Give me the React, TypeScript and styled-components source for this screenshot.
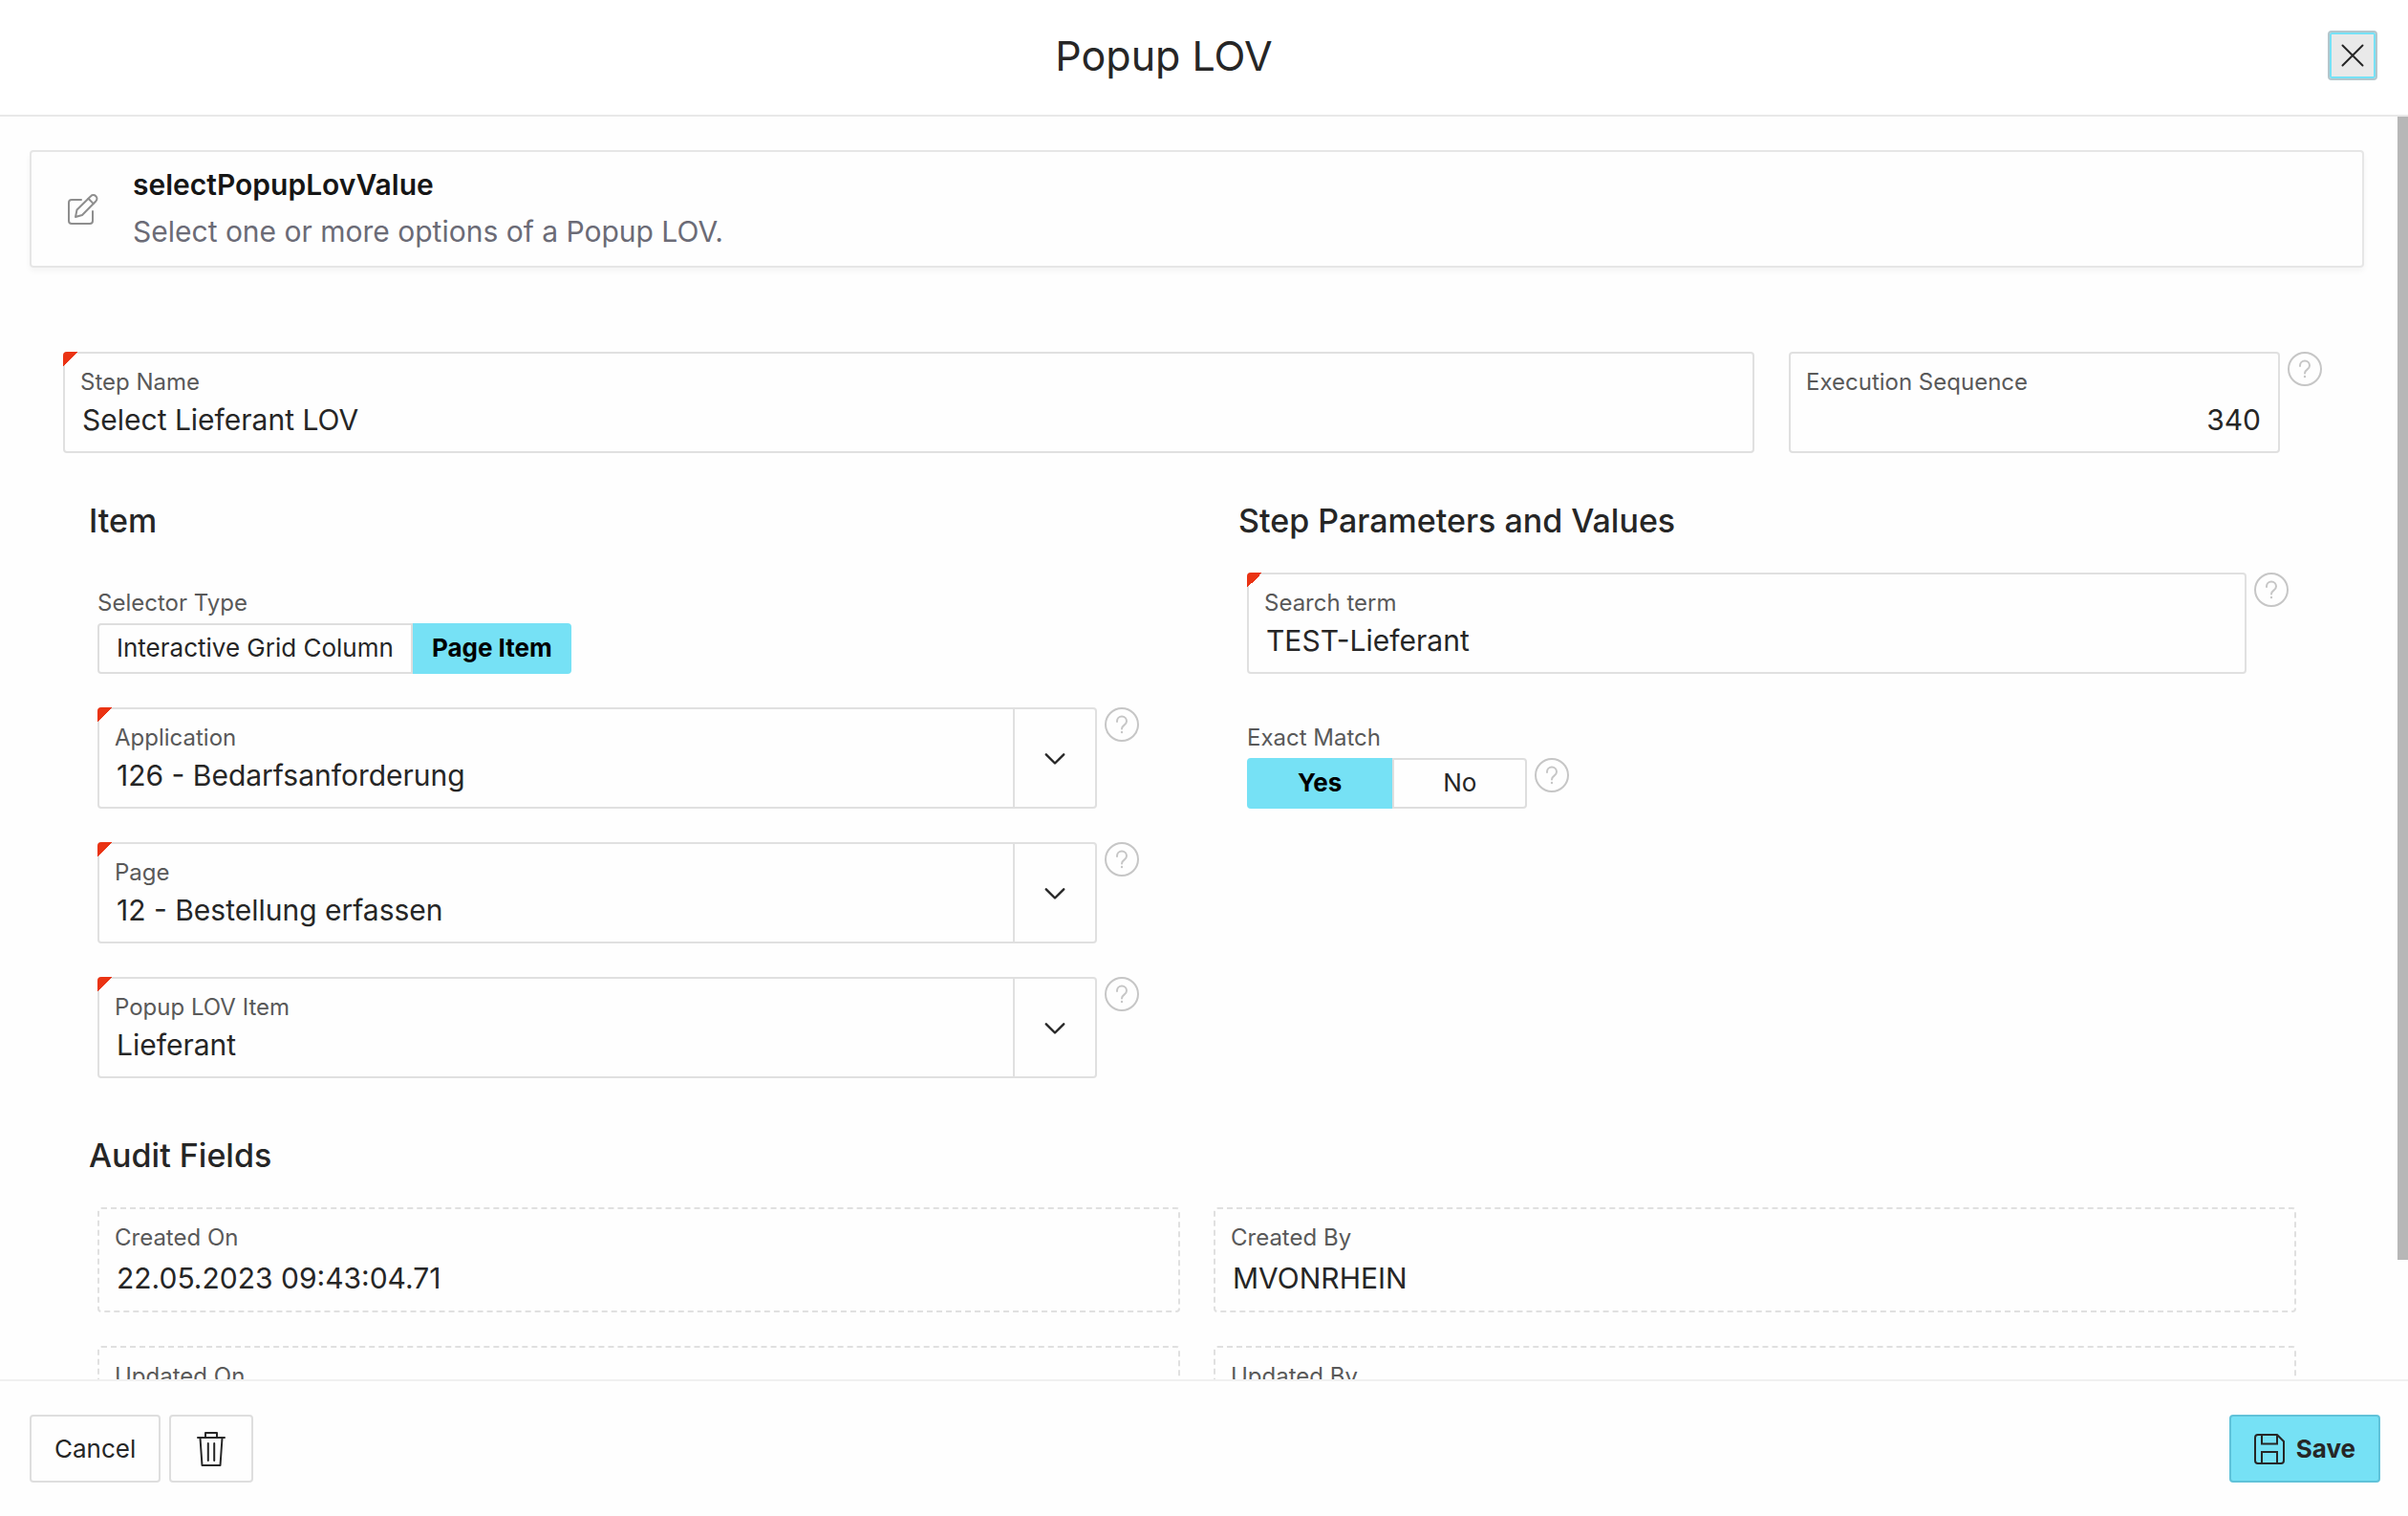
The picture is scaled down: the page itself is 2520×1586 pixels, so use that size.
import React, { useEffect, useId, useRef, useState } from "react";
import styled, { createGlobalStyle, css } from "styled-components";

const colors = {
  text: "#262626",
  label: "#595959",
  muted: "#6b6b76",
  page: "#fefefe",
  line: "#e0e0e0",
  divider: "#e8e8e8",
  accent: "#76e1f5",
  accentEdge: "#60c2d9",
  required: "#ea3313",
  help: "#c6c6c6",
};

const GlobalStyle = createGlobalStyle`
  *, *::before, *::after { box-sizing: border-box; }
  body {
    margin: 0;
    background: ${colors.page};
    color: ${colors.text};
    font-family: Inter, "Liberation Sans", sans-serif;
  }
  button, input { font: inherit; color: inherit; }
`;

const Dialog = styled.div`
  display: flex;
  flex-direction: column;
  height: 100vh;
`;

const Header = styled.header`
  display: flex;
  align-items: center;
  flex: none;
  gap: 32px;
  padding: 32px;
  padding-bottom: 36px;
  border-bottom: 2px solid ${colors.divider};
  background: #fff;
`;

const DialogTitle = styled.h1`
  flex: 1;
  margin: 0;
  text-align: center;
  font-size: 43px;
  line-height: 52px;
  font-weight: 400;
`;

const CloseButton = styled.button`
  display: flex;
  align-items: center;
  justify-content: center;
  width: 52px;
  height: 52px;
  padding: 0;
  border: 2px solid #b3c6cc;
  border-radius: 4px;
  background: #e9e9e9;
  box-shadow: inset 0 0 0 2px ${colors.accent};
`;

const Body = styled.div`
  display: flex;
  flex: 1;
  min-height: 0;
`;

const ScrollPane = styled.main`
  flex: 1;
  min-width: 0;
  overflow-y: auto;
  scrollbar-width: none;
  padding-bottom: 63px;
`;

const ScrollTrack = styled.div`
  flex: none;
  width: 14px;
  padding-left: 3px;
`;

const ScrollThumb = styled.div`
  background: #b7b7b7;
`;

const InfoCard = styled.section`
  display: flex;
  align-items: center;
  gap: 36px;
  margin: 35px 32px 88px 31px;
  padding: 16px 38px 18px;
  border: 2px solid #e6e6e6;
  border-radius: 4px;
  box-shadow: 0 4px 6px rgba(0, 0, 0, 0.04);
`;

const InfoText = styled.div`
  display: flex;
  flex-direction: column;
  gap: 13px;
  font-size: 30px;
  line-height: 36px;
`;

const InfoTitle = styled.h2`
  margin: 0;
  font: inherit;
  font-weight: 600;
  color: #161616;
`;

const InfoDescription = styled.p`
  margin: 0;
  color: ${colors.muted};
`;

const StepRow = styled.div`
  display: grid;
  grid-template-columns: 9fr 3fr;
  padding: 0 50px 0 48px;
`;

const StepCell = styled.div`
  padding: 0 18px;
`;

const Regions = styled.div`
  display: grid;
  grid-template-columns: 1fr 1fr;
  margin-top: 51px;
  padding: 0 50px;
`;

const Region = styled.section`
  min-width: 0;
`;

const AuditRegion = styled(Region)`
  margin-top: 61px;
  padding: 0 50px;
`;

const RegionTitle = styled.h2`
  margin: 0 0 34px;
  padding-left: 43px;
  font-size: 34px;
  line-height: 40px;
  font-weight: 500;
`;

const FieldStack = styled.div`
  display: flex;
  flex-direction: column;
  gap: 35px;
  padding: 0 61px 0 52px;
`;

const AuditGrid = styled.div`
  display: grid;
  grid-template-columns: 1fr 1fr;
  gap: 35px;
  padding: 0 53px 0 52px;
`;

const FieldRow = styled.div<{ $trailing?: boolean }>`
  display: flex;
  align-items: flex-start;
  gap: 8px;
  ${(p) => p.$trailing && css`padding-right: 8px;`}
`;

const FieldBox = styled.div<{ $required?: boolean; $readOnly?: boolean }>`
  position: relative;
  display: flex;
  flex: 1;
  min-width: 0;
  height: ${(p) => (p.$readOnly ? "110px" : "106px")};
  border: 2px ${(p) => (p.$readOnly ? "dashed" : "solid")} ${colors.line};
  border-radius: 4px;

  ${(p) =>
    p.$required &&
    css`
      &::before {
        content: "";
        position: absolute;
        top: -2px;
        left: -2px;
        width: 16px;
        height: 16px;
        border-top-left-radius: 4px;
        background: linear-gradient(135deg, ${colors.required} 50%, transparent 50%);
      }
    `}
`;

const FieldText = styled.div<{ $gap?: number }>`
  display: flex;
  flex: 1;
  min-width: 0;
  flex-direction: column;
  gap: ${(p) => p.$gap ?? 7}px;
  padding: 16px 18px 0 16px;
`;

const FieldLabel = styled.label`
  font-size: 24px;
  line-height: 28px;
  color: ${colors.label};
`;

const FieldInput = styled.input<{ $alignEnd?: boolean }>`
  width: 100%;
  height: 36px;
  padding: 0 0 0 2px;
  border: 0;
  outline: 0;
  background: transparent;
  font-size: 30px;
  line-height: 36px;
  text-align: ${(p) => (p.$alignEnd ? "right" : "left")};
`;

const LovButton = styled.button`
  display: flex;
  align-items: center;
  justify-content: center;
  flex: none;
  width: 86px;
  padding: 0;
  border: 0;
  border-left: 2px solid ${colors.line};
  background: transparent;
`;

const HelpButton = styled.button`
  display: block;
  flex: none;
  width: 36px;
  height: 36px;
  padding: 0;
  border: 0;
  background: transparent;
  color: ${colors.help};

  svg { display: block; }
`;

const ToggleField = styled.fieldset`
  display: flex;
  flex-direction: column;
  gap: 7px;
  min-width: 0;
  margin: 0;
  padding: 18px 0 0;
  border: 0;
`;

const ToggleLabel = styled.span`
  font-size: 24px;
  line-height: 28px;
  color: ${colors.label};
`;

const ToggleGroup = styled.div`
  display: flex;
`;

const ToggleOption = styled.label<{ $wide?: boolean }>`
  position: relative;
  display: block;
  height: 53px;
  padding: 8px ${(p) => (p.$wide ? 51 : 18)}px;
  border: 2px solid #dedede;
  font-size: 26px;
  line-height: 32px;

  &:first-child { border-radius: 4px 0 0 4px; }
  &:last-child { border-radius: 0 4px 4px 0; }
  &:not(:first-child) { border-left-width: 0; padding-left: ${(p) => (p.$wide ? 53 : 20)}px; }
  &:has(input:checked) {
    border-color: ${colors.accent};
    background: ${colors.accent};
    color: #000;
    font-weight: 700;
  }
  &:has(input:checked) + & {
    border-left: 2px solid #dedede;
    padding-left: ${(p) => (p.$wide ? 51 : 18)}px;
  }
`;

const ToggleRadio = styled.input`
  position: absolute;
  inset: 0;
  margin: 0;
  opacity: 0;
`;

const Footer = styled.footer`
  display: flex;
  flex: none;
  gap: 9px;
  padding: 35px 29px 35px 31px;
  border-top: 2px solid #f0f0f0;
`;

const FooterButton = styled.button<{ $primary?: boolean; $iconOnly?: boolean }>`
  display: flex;
  align-items: center;
  justify-content: center;
  gap: 12px;
  height: 71px;
  padding: 0 ${(p) => (p.$iconOnly ? 26 : 24)}px;
  border: 2px solid ${(p) => (p.$primary ? colors.accentEdge : "#dedede")};
  border-radius: 4px;
  background: ${(p) => (p.$primary ? colors.accent : "transparent")};
  font-size: 26px;
  line-height: 32px;
  font-weight: ${(p) => (p.$primary ? 700 : 400)};
`;

const FooterSpacer = styled.div`
  flex: 1;
`;

const CloseIcon = () => (
  <svg width="24" height="24" viewBox="0 0 24 24" fill="none" stroke={colors.text} strokeWidth="2" strokeLinecap="round" aria-hidden="true">
    <path d="M1.500 1.500 22.500 22.500M22.500 1.500 1.500 22.500" />
  </svg>
);

const EditIcon = () => (
  <svg width="32" height="34" viewBox="0 -2 32 34" fill="none" stroke="#8e8e8e" strokeWidth="2" strokeLinecap="round" strokeLinejoin="round" aria-hidden="true">
    <path d="M14 6H4a3 3 0 0 0-3 3v19a3 3 0 0 0 3 3h19a3 3 0 0 0 3-3V18" />
    <path d="m8 24 1.500-7.500L24 2.200a3.600 3.600 0 0 1 5.300 0 3.600 3.600 0 0 1 0 5.300L15 22Z" />
    <path d="m21.500 4.800 5.300 5.300" />
  </svg>
);

const HelpIcon = () => (
  <svg width="36" height="36" viewBox="0 0 36 36" fill="none" stroke="currentColor" strokeWidth="2" strokeLinecap="round" aria-hidden="true">
    <circle cx="18" cy="18" r="17" />
    <path d="M13 15v-.5a5 5 0 0 1 10 0c0 4.500-5 3.800-5 8" />
    <circle cx="18" cy="26" r="1.200" fill="currentColor" stroke="none" />
  </svg>
);

const ChevronIcon = () => (
  <svg width="22" height="14" viewBox="0 -2 22 14" fill="none" stroke={colors.text} strokeWidth="2.400" strokeLinecap="round" strokeLinejoin="round" aria-hidden="true">
    <path d="m1.800 1.300 9.200 9.200 9.200-9.200" />
  </svg>
);

const TrashIcon = () => (
  <svg width="32" height="36" viewBox="0 0 32 36" fill="none" stroke={colors.text} strokeWidth="2" strokeLinecap="round" strokeLinejoin="round" aria-hidden="true">
    <path d="M2 6h28M10 6V1h12v5M4.500 6.500 6.500 35h19l2-28.500M12.800 12v18M19.200 12v18" />
  </svg>
);

const SaveIcon = () => (
  <svg width="32" height="32" viewBox="0 0 32 32" fill="none" stroke={colors.text} strokeWidth="2" strokeLinejoin="round" aria-hidden="true">
    <path d="M4 1h20l7 7v20a3 3 0 0 1-3 3H4a3 3 0 0 1-3-3V4a3 3 0 0 1 3-3Z" />
    <path d="M8 1v9.500h16V1M8 31V19h16v12" strokeLinejoin="miter" />
  </svg>
);

const Help = ({ topic }: { topic: string }) => (
  <HelpButton type="button" aria-label={`Help: ${topic}`}>
    <HelpIcon />
  </HelpButton>
);

type FieldProps = {
  label: string;
  value: string;
  required?: boolean;
  readOnly?: boolean;
  lov?: boolean;
  alignEnd?: boolean;
};

function Field({ label, value, required, readOnly, lov, alignEnd }: FieldProps) {
  const id = useId();
  return (
    <FieldBox $required={required} $readOnly={readOnly}>
      <FieldText $gap={readOnly ? 10 : 7}>
        <FieldLabel htmlFor={id}>{label}</FieldLabel>
        <FieldInput
          id={id}
          type="text"
          defaultValue={value}
          required={required}
          readOnly={readOnly}
          $alignEnd={alignEnd}
        />
      </FieldText>
      {lov && (
        <LovButton type="button" aria-label={`Open list: ${label}`}>
          <ChevronIcon />
        </LovButton>
      )}
    </FieldBox>
  );
}

type ToggleProps = { label: string; options: string[]; initial: string; wide?: boolean };

function Toggle({ label, options, initial, wide }: ToggleProps) {
  const name = useId();
  return (
    <ToggleField aria-labelledby={`${name}-label`}>
      <ToggleLabel id={`${name}-label`}>{label}</ToggleLabel>
      <ToggleGroup>
        {options.map((option) => (
          <ToggleOption key={option} $wide={wide}>
            <ToggleRadio type="radio" name={name} defaultChecked={option === initial} />
            {option}
          </ToggleOption>
        ))}
      </ToggleGroup>
    </ToggleField>
  );
}

const ToggleRow = styled(FieldRow)`
  align-items: flex-end;

  ${HelpButton} { margin-bottom: 17px; }
`;

const lovFields = [
  { label: "Application", value: "126 - Bedarfsanforderung" },
  { label: "Page", value: "12 - Bestellung erfassen" },
  { label: "Popup LOV Item", value: "Lieferant" },
];

const auditFields = [
  { label: "Created On", value: "22.05.2023 09:43:04.71" },
  { label: "Created By", value: "MVONRHEIN" },
  { label: "Updated On", value: "" },
  { label: "Updated By", value: "" },
];

export default function App() {
  const pane = useRef<HTMLElement>(null);
  const [thumb, setThumb] = useState({ size: 100, offset: 0 });

  const measure = () => {
    const el = pane.current;
    if (!el) return;
    setThumb({
      size: (el.clientHeight / el.scrollHeight) * 100,
      offset: (el.scrollTop / el.scrollHeight) * el.clientHeight,
    });
  };

  useEffect(() => {
    measure();
    window.addEventListener("resize", measure);
    return () => window.removeEventListener("resize", measure);
  }, []);

  return (
    <>
      <GlobalStyle />
      <Dialog role="dialog" aria-labelledby="dialog-title">
        <Header>
          <DialogTitle id="dialog-title">Popup LOV</DialogTitle>
          <CloseButton type="button" aria-label="Close">
            <CloseIcon />
          </CloseButton>
        </Header>

        <Body>
          <ScrollPane ref={pane} onScroll={measure}>
            <InfoCard>
              <EditIcon />
              <InfoText>
                <InfoTitle>selectPopupLovValue</InfoTitle>
                <InfoDescription>Select one or more options of a Popup LOV.</InfoDescription>
              </InfoText>
            </InfoCard>

            <StepRow>
              <StepCell>
                <Field label="Step Name" value="Select Lieferant LOV" required />
              </StepCell>
              <StepCell>
                <FieldRow $trailing>
                  <Field label="Execution Sequence" value="340" alignEnd />
                  <Help topic="Execution Sequence" />
                </FieldRow>
              </StepCell>
            </StepRow>

            <Regions>
              <Region>
                <RegionTitle>Item</RegionTitle>
                <FieldStack>
                  <Toggle
                    label="Selector Type"
                    options={["Interactive Grid Column", "Page Item"]}
                    initial="Page Item"
                  />
                  {lovFields.map((f) => (
                    <FieldRow key={f.label}>
                      <Field label={f.label} value={f.value} required lov />
                      <Help topic={f.label} />
                    </FieldRow>
                  ))}
                </FieldStack>
              </Region>
              <Region>
                <RegionTitle>Step Parameters and Values</RegionTitle>
                <FieldStack>
                  <FieldRow>
                    <Field label="Search term" value="TEST-Lieferant" required />
                    <Help topic="Search term" />
                  </FieldRow>
                  <ToggleRow>
                    <Toggle label="Exact Match" options={["Yes", "No"]} initial="Yes" wide />
                    <Help topic="Exact Match" />
                  </ToggleRow>
                </FieldStack>
              </Region>
            </Regions>

            <AuditRegion>
              <RegionTitle>Audit Fields</RegionTitle>
              <AuditGrid>
                {auditFields.map((f) => (
                  <Field key={f.label} label={f.label} value={f.value} readOnly />
                ))}
              </AuditGrid>
            </AuditRegion>
          </ScrollPane>
          <ScrollTrack>
            <ScrollThumb style={{ height: `${thumb.size}%`, marginTop: thumb.offset }} />
          </ScrollTrack>
        </Body>

        <Footer>
          <FooterButton type="button">Cancel</FooterButton>
          <FooterButton type="button" aria-label="Delete" $iconOnly>
            <TrashIcon />
          </FooterButton>
          <FooterSpacer />
          <FooterButton type="button" $primary>
            <SaveIcon />
            Save
          </FooterButton>
        </Footer>
      </Dialog>
    </>
  );
}
